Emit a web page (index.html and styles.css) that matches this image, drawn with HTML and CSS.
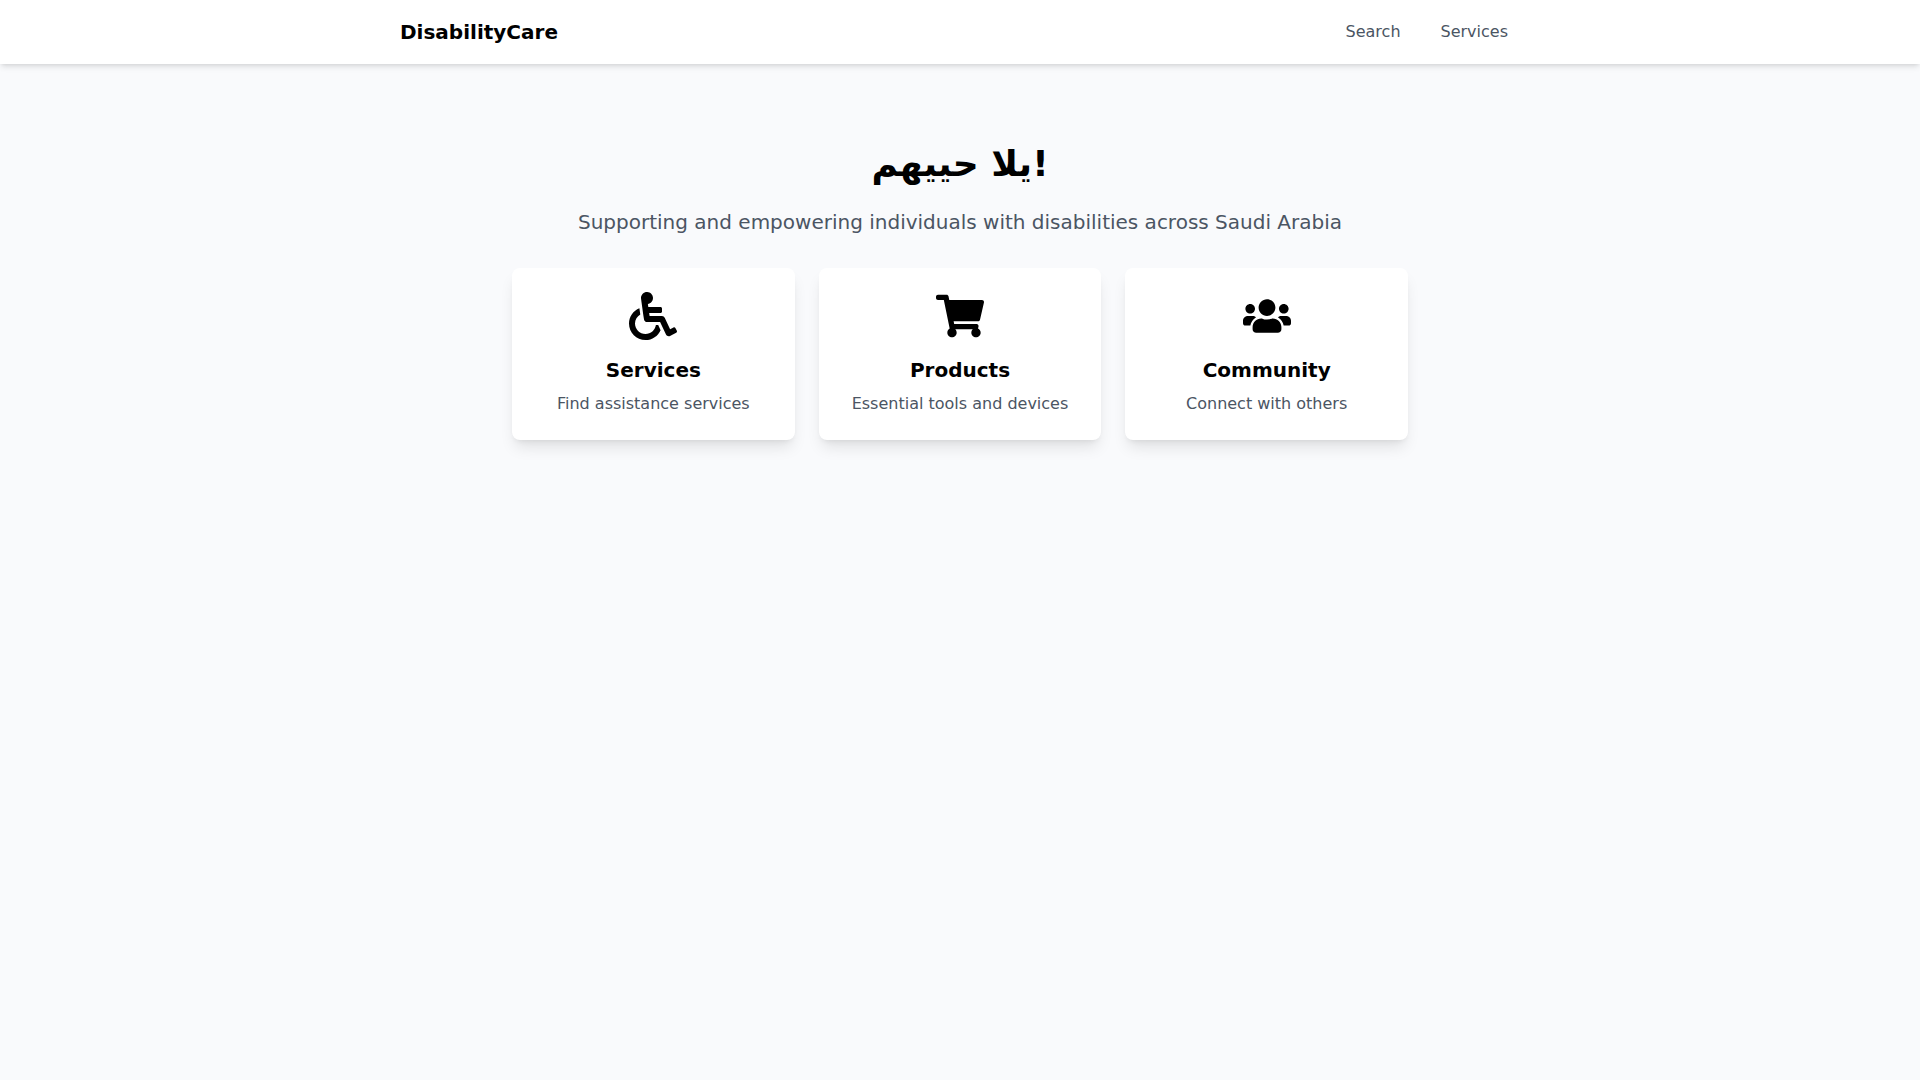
FILE: index.html
```html
<!DOCTYPE html>
<html lang="en">
<head>
  <meta charset="UTF-8">
  <meta name="viewport" content="width=device-width, initial-scale=1.0">
  <title>DisabilityCare</title>
  <link rel="stylesheet" href="styles.css">
</head>
<body>
  <nav class="navbar">
    <div class="navbar-inner">
      <a href="#" class="brand">DisabilityCare</a>
      <div class="nav-links">
        <a href="#search">Search</a>
        <a href="#services">Services</a>
      </div>
    </div>
  </nav>

  <main class="hero">
    <h1>يلا حييهم!</h1>
    <p class="subtitle">Supporting and empowering individuals with disabilities across Saudi Arabia</p>

    <div class="cards">
      <a href="#services" class="card">
        <svg class="icon" viewBox="0 0 512 512" aria-hidden="true"><path d="M496.101 385.669l14.227 28.663c3.929 7.915.697 17.516-7.218 21.445l-65.465 32.886c-16.049 7.967-35.556 1.194-43.189-15.055L331.679 320H192c-15.925 0-29.426-11.71-31.679-27.475C126.433 55.308 128.38 70.044 128 64c0-36.358 30.318-65.635 67.052-63.929 33.271 1.545 60.048 28.905 60.925 62.201.868 32.933-23.152 60.423-54.608 65.039l4.67 32.69H336c8.837 0 16 7.163 16 16v32c0 8.837-7.163 16-16 16H215.182l4.572 32H352a32 32 0 0 1 28.962 18.392L438.477 396.8l36.178-18.349c7.915-3.929 17.517-.697 21.446 7.218zM311.358 352h-24.506c-7.788 54.204-54.528 96-110.852 96-61.757 0-112-50.243-112-112 0-41.505 22.694-77.809 56.324-97.156-3.712-25.965-6.844-47.86-9.488-66.333C45.956 198.464 0 261.963 0 336c0 97.047 78.953 176 176 176 71.87 0 133.806-43.308 161.11-105.192L311.358 352z"/></svg>
        <h2>Services</h2>
        <p>Find assistance services</p>
      </a>

      <a href="#products" class="card">
        <svg class="icon" viewBox="0 0 576 512" aria-hidden="true"><path d="M528.12 301.319l47.273-208C578.806 78.301 567.391 64 551.99 64H159.208l-9.166-44.81C147.758 8.021 137.93 0 126.529 0H24C10.745 0 0 10.745 0 24v16c0 13.255 10.745 24 24 24h69.883l70.248 343.435C147.325 417.1 136 435.222 136 456c0 30.928 25.072 56 56 56s56-25.072 56-56c0-15.674-6.447-29.835-16.824-40h209.647C430.447 426.165 424 440.326 424 456c0 30.928 25.072 56 56 56s56-25.072 56-56c0-22.172-12.888-41.332-31.579-50.405l5.517-24.276c3.413-15.018-8.002-29.319-23.403-29.319H218.117l-6.545-32h293.145c11.206 0 20.92-7.754 23.403-18.681z"/></svg>
        <h2>Products</h2>
        <p>Essential tools and devices</p>
      </a>

      <a href="#community" class="card">
        <svg class="icon" viewBox="0 0 640 512" aria-hidden="true"><path d="M96 224c35.3 0 64-28.7 64-64s-28.7-64-64-64-64 28.7-64 64 28.7 64 64 64zm448 0c35.3 0 64-28.7 64-64s-28.7-64-64-64-64 28.7-64 64 28.7 64 64 64zm32 32h-64c-17.6 0-33.5 7.1-45.1 18.6 40.3 22.1 68.9 62 75.1 109.4h66c17.7 0 32-14.3 32-32v-32c0-35.3-28.7-64-64-64zm-256 0c61.9 0 112-50.1 112-112S381.9 32 320 32 208 82.1 208 144s50.1 112 112 112zm76.8 32h-8.3c-20.8 10-43.9 16-68.5 16s-47.6-6-68.5-16h-8.3C179.6 288 128 339.6 128 403.2V432c0 26.5 21.5 48 48 48h288c26.5 0 48-21.5 48-48v-28.8c0-63.6-51.6-115.2-115.2-115.2zm-223.7-13.4C161.5 263.1 145.6 256 128 256H64c-35.3 0-64 28.7-64 64v32c0 17.7 14.3 32 32 32h65.9c6.3-47.4 34.9-87.3 75.2-109.4z"/></svg>
        <h2>Community</h2>
        <p>Connect with others</p>
      </a>
    </div>
  </main>
</body>
</html>
```
FILE: styles.css
```css
* {
  box-sizing: border-box;
  margin: 0;
  padding: 0;
}
body {
  font-family: "DejaVu Sans", sans-serif;
  font-size: 16px;
  line-height: 24px;
  background-color: #f9fafc;
  color: #000;
}
a {
  color: inherit;
  text-decoration: none;
}

.navbar {
  background-color: #fff;
  box-shadow: 0 4px 6px -1px rgba(0, 0, 0, 0.1), 0 2px 4px -2px rgba(0, 0, 0, 0.1);
}
.navbar-inner {
  display: flex;
  justify-content: space-between;
  align-items: center;
  max-width: 1152px;
  height: 64px;
  margin: 0 auto;
  padding: 0 16px;
}
.brand {
  font-size: 20px;
  line-height: 28px;
  font-weight: bold;
}
.nav-links {
  display: flex;
  gap: 16px;
}
.nav-links a {
  padding: 8px 12px;
  color: #4b5563;
}
.nav-links a:hover {
  color: #000;
}

.hero {
  max-width: 1152px;
  margin: 0 auto;
  padding: 80px 16px;
  text-align: center;
}
.hero h1 {
  margin-bottom: 24px;
  font-size: 36px;
  line-height: 40px;
}
.subtitle {
  margin-bottom: 32px;
  font-size: 20px;
  line-height: 28px;
  color: #4b5563;
}

.cards {
  display: grid;
  grid-template-columns: repeat(3, 1fr);
  gap: 24px;
  max-width: 896px;
  margin: 0 auto;
}
.card {
  padding: 24px;
  background-color: #fff;
  border-radius: 8px;
  box-shadow: 0 10px 15px -3px rgba(0, 0, 0, 0.1), 0 4px 6px -4px rgba(0, 0, 0, 0.1);
}
.icon {
  display: block;
  width: 48px;
  height: 48px;
  margin: 0 auto 16px;
}
.card h2 {
  margin-bottom: 8px;
  font-size: 20px;
  line-height: 28px;
}
.card p {
  color: #4b5563;
}

@media (max-width: 768px) {
  .cards {
    grid-template-columns: 1fr;
  }
}
```
